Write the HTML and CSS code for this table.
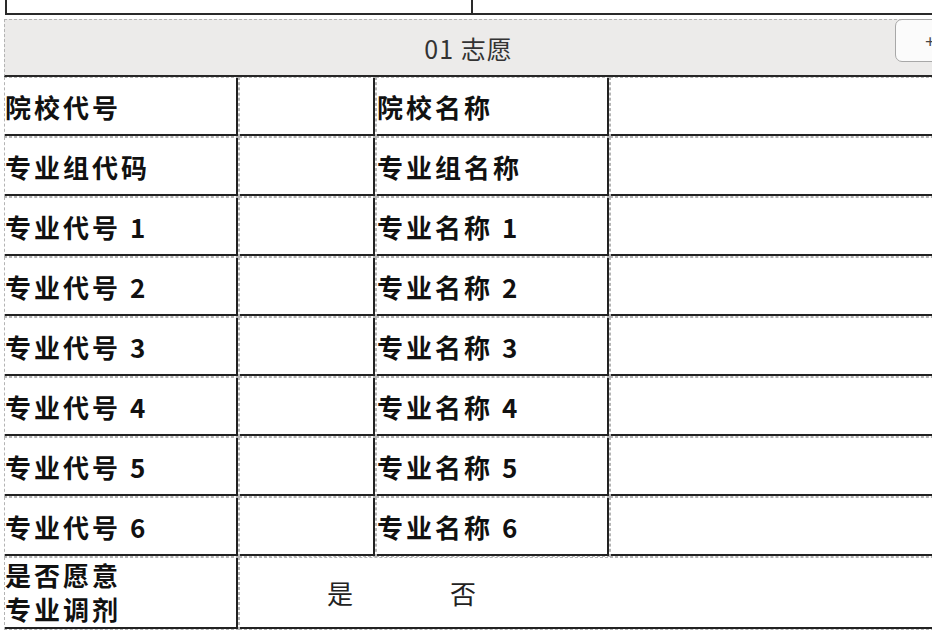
FILE: index.html
```html
<!DOCTYPE html>
<html lang="zh-CN">
<head>
<meta charset="utf-8">
<title>志愿填报</title>
<link rel="stylesheet" href="styles.css">
</head>
<body>
<div class="page">
  <div class="top">
    <div class="top-left"></div>
    <div class="top-right"></div>
  </div>
  <div class="header">
    <div class="header-side"></div>
    <div class="header-title">01 志愿</div>
    <div class="header-side header-end"><button class="header-btn" type="button">+</button></div>
  </div>
  <table class="grid">
    <colgroup>
      <col class="w1"><col class="w2"><col class="w3"><col class="w4">
    </colgroup>
    <tbody>
      <tr><td><div class="c lab">院校代号</div></td><td><div class="c"></div></td><td><div class="c lab">院校名称</div></td><td><div class="c"></div></td></tr>
      <tr><td><div class="c lab">专业组代码</div></td><td><div class="c"></div></td><td><div class="c lab">专业组名称</div></td><td><div class="c"></div></td></tr>
      <tr><td><div class="c lab">专业代号 1</div></td><td><div class="c"></div></td><td><div class="c lab">专业名称 1</div></td><td><div class="c"></div></td></tr>
      <tr><td><div class="c lab">专业代号 2</div></td><td><div class="c"></div></td><td><div class="c lab">专业名称 2</div></td><td><div class="c"></div></td></tr>
      <tr><td><div class="c lab">专业代号 3</div></td><td><div class="c"></div></td><td><div class="c lab">专业名称 3</div></td><td><div class="c"></div></td></tr>
      <tr><td><div class="c lab">专业代号 4</div></td><td><div class="c"></div></td><td><div class="c lab">专业名称 4</div></td><td><div class="c"></div></td></tr>
      <tr><td><div class="c lab">专业代号 5</div></td><td><div class="c"></div></td><td><div class="c lab">专业名称 5</div></td><td><div class="c"></div></td></tr>
      <tr><td><div class="c lab">专业代号 6</div></td><td><div class="c"></div></td><td><div class="c lab">专业名称 6</div></td><td><div class="c"></div></td></tr>
      <tr class="last">
        <td><div class="c lab two">是否愿意<br>专业调剂</div></td>
        <td colspan="3"><div class="c opts"><span class="opt">是</span><span class="opt">否</span></div></td>
      </tr>
    </tbody>
  </table>
</div>
</body>
</html>
```

FILE: styles.css
```css
html, body {
  margin: 0;
  padding: 0;
  background: #ffffff;
  overflow: hidden;
}

body {
  width: 932px;
  height: 632px;
  font-family: "Noto Sans CJK SC", "Noto Sans", sans-serif;
  color: #1a1a1a;
}

.page {
  padding-left: 4px;
  width: 928px;
}

.top {
  display: flex;
  height: 15px;
}

.top-left {
  width: 468px;
  margin-left: 1px;
  border-left: 2px solid #2a2a2a;
  border-right: 2px solid #2a2a2a;
  border-bottom: 2px solid #2a2a2a;
  box-sizing: border-box;
}

.top-right {
  flex: 1;
  border-bottom: 2px solid #2a2a2a;
  box-sizing: border-box;
}

.header {
  margin-top: 4px;
  height: 58px;
  box-sizing: border-box;
  background: #ecebea;
  border-top: 1px dashed #b4b4b4;
  border-left: 1px dashed #b4b4b4;
  border-bottom: 2px solid #262626;
  display: grid;
  grid-template-columns: 1fr auto 1fr;
  align-items: center;
}

.header-title {
  font-size: 25px;
  font-weight: 400;
  color: #333333;
  letter-spacing: 1px;
  line-height: 30px;
}

.header-end {
  display: flex;
  justify-content: flex-end;
  align-self: start;
}

.header-btn {
  width: 52px;
  height: 43px;
  margin-right: -15px;
  margin-top: -1px;
  border: 1px solid #a8a8a8;
  border-radius: 7px;
  background: #fbfbfb;
  font: 400 18px "Noto Sans", sans-serif;
  color: #444;
  text-align: left;
  padding: 0 0 0 29px;
}

.grid {
  border-collapse: separate;
  border-spacing: 0;
  table-layout: fixed;
  width: 960px;
}

.w1 { width: 235px; }
.w2 { width: 137px; }
.w3 { width: 234px; }
.w4 { width: 354px; }

.grid td {
  padding: 0;
  border: 1px dashed #b4b4b4;
  vertical-align: top;
}

.c {
  height: 56px;
  border-right: 2px solid #222222;
  border-bottom: 2px solid #222222;
  display: flex;
  align-items: center;
}

.lab {
  font-size: 26px;
  font-weight: 700;
  letter-spacing: 3px;
  white-space: nowrap;
  color: #111111;
}

.last .c {
  height: 69px;
}

.two {
  display: block;
  line-height: 34px;
}

.opts {
  border-right: none;
  padding-left: 87px;
  font-size: 26px;
  font-weight: 400;
  color: #222222;
}

.opt + .opt {
  margin-left: 97px;
}
```
